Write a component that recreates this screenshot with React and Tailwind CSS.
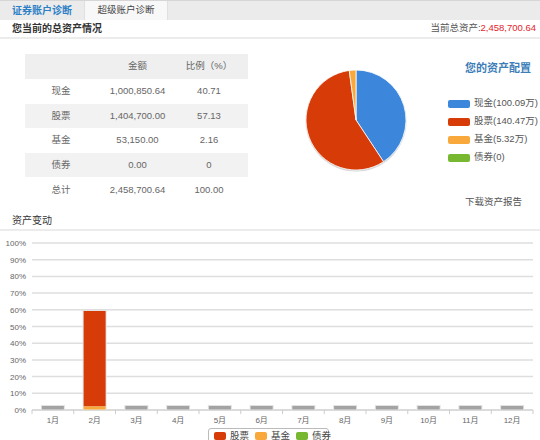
import React from "react";

const rows = [
  { name: "现金", amt: "1,000,850.64", pct: "40.71", bg: "bg-white" },
  { name: "股票", amt: "1,404,700.00", pct: "57.13", bg: "bg-[#f2f2f2]" },
  { name: "基金", amt: "53,150.00", pct: "2.16", bg: "bg-white" },
  { name: "债券", amt: "0.00", pct: "0", bg: "bg-[#f2f2f2]" },
  { name: "总计", amt: "2,458,700.64", pct: "100.00", bg: "bg-white" },
];

const legend = [
  { c: "bg-[#3c86dc]", t: "现金(100.09万)" },
  { c: "bg-[#d63b08]", t: "股票(140.47万)" },
  { c: "bg-[#f9a93c]", t: "基金(5.32万)" },
  { c: "bg-[#78b831]", t: "债券(0)" },
];

function Pie() {
  return (
    <svg width="112" height="112" viewBox="0 0 112 112">
      <circle cx="56" cy="57" r="50.5" fill="#d8d8d8" />
      <g transform="translate(1,1)">
        <path d="M55 55 L55 5 A50 50 0 0 1 82.56 96.72 Z" fill="#3c86dc" stroke="#fff" strokeWidth="0.8" />
        <path d="M55 55 L82.56 96.72 A50 50 0 1 1 48.24 5.46 Z" fill="#d63b08" stroke="#fff" strokeWidth="0.8" />
        <path d="M55 55 L48.24 5.46 A50 50 0 0 1 55 5 Z" fill="#f9a93c" stroke="#fff" strokeWidth="0.8" />
      </g>
    </svg>
  );
}

function Chart() {
  const x0 = 32;
  const x1 = 533;
  const yTop = 12; // 100%
  const yBot = 179; // 0%
  const h = yBot - yTop;
  const cw = (x1 - x0) / 12;
  const grid = [];
  for (let i = 0; i <= 10; i++) {
    const y = yBot - (h * i) / 10;
    grid.push(
      <g key={i}>
        {i > 0 && <line x1={x0} x2={x1} y1={y} y2={y} stroke="#dedede" strokeWidth="1.5" />}
        <text x="26" y={y + 3} textAnchor="end" fontSize="8" fill="#666">
          {i * 10}%
        </text>
      </g>
    );
  }
  const months = [];
  for (let m = 0; m < 12; m++) {
    const cx = x0 + cw * (m + 0.5);
    months.push(
      <g key={m}>
        <text x={cx} y={yBot + 13} textAnchor="middle" fontSize="8" fill="#666">
          {m + 1}月
        </text>
        {m !== 1 && (
          <g>
            <rect x={cx - 12} y={yBot - 5} width="24" height="5" fill="#e2e2e2" />
            <rect x={cx - 11} y={yBot - 4} width="22" height="3.5" fill="#a3a3a3" />
          </g>
        )}
      </g>
    );
  }
  const ticks = [];
  for (let k = 0; k <= 12; k++) {
    const x = x0 + cw * k;
    ticks.push(<line key={k} x1={x} x2={x} y1={yBot} y2={yBot + 4} stroke="#ccc" strokeWidth="1" />);
  }
  const c2 = x0 + cw * 1.5;
  const redTop = yBot - h * 0.5929;
  const orTop = yBot - h * 0.0216;
  return (
    <svg width="540" height="195" viewBox="0 0 540 195" className="block">
      {grid}
      <line x1={x0} x2={x1} y1={yBot} y2={yBot} stroke="#cfcfcf" strokeWidth="1.5" />
      {ticks}
      <rect x={c2 - 12} y={redTop - 1} width="24" height={yBot - redTop + 1} fill="#e4e4e4" />
      <rect x={c2 - 11} y={redTop} width="22" height={orTop - redTop} fill="#d63b08" />
      <rect x={c2 - 11} y={orTop} width="22" height={yBot - orTop - 0.5} fill="#f9a93c" />
      {months}
    </svg>
  );
}

export default function App() {
  return (
    <div className="w-[540px] h-[440px] overflow-hidden bg-white font-['Liberation_Sans','Noto_Sans_CJK_SC',sans-serif] text-[#555]">
      {/* tabs */}
      <div className="h-[20px] flex bg-[#ebebeb] border-t border-[#d6d6d6]">
        <div className="w-[84px] flex items-center justify-center text-[10px] text-[#2c80c6] font-bold">证券账户诊断</div>
        <div className="w-[84px] flex items-center justify-center text-[9.5px] text-[#444] bg-[#f8f8f8] border-x border-[#e0e0e0]">超级账户诊断</div>
        <div className="flex-1" />
      </div>
      {/* summary title */}
      <div className="h-[19px] flex items-center justify-between pl-[12px] pr-[4px] border-b-2 border-[#ececec]">
        <span className="text-[10px] font-bold text-[#333]">您当前的总资产情况</span>
        <span className="text-[9.5px] text-[#555]">
          当前总资产:<span className="text-[#e2242c]">2,458,700.64</span>
        </span>
      </div>
      {/* middle */}
      <div className="h-[173px] flex">
        <div className="pl-[25px] pt-[15px]">
          <div className="w-[223px] text-[9.5px] text-[#666]">
            <div className="h-[25px] flex items-center bg-[#efefef]">
              <div className="w-[72px]" />
              <div className="w-[81px] text-center">金额</div>
              <div className="w-[62px] text-center">比例（%）</div>
            </div>
            {rows.map((r) => (
              <div key={r.name} className={`h-[24.6px] flex items-center ${r.bg}`}>
                <div className="w-[72px] text-center">{r.name}</div>
                <div className="w-[81px] text-center">{r.amt}</div>
                <div className="w-[62px] text-center">{r.pct}</div>
              </div>
            ))}
          </div>
        </div>
        <div className="pl-[52px] pt-[25px]">
          <Pie />
        </div>
        <div className="pl-[36px] flex flex-col">
          <div className="mt-[21px] pl-[17px] text-[11px] font-bold text-[#3d7db8]">您的资产配置</div>
          <div className="mt-[21px] flex flex-col gap-[6px]">
            {legend.map((l) => (
              <div key={l.t} className="flex items-center h-[12px]">
                <div className={`w-[22px] h-[8px] shrink-0 rounded-[2px] ${l.c}`} />
                <span className="ml-[4px] text-[9.5px] text-[#555] whitespace-nowrap">{l.t}</span>
              </div>
            ))}
          </div>
          <div className="mt-[31px] pl-[17px] text-[9.5px] text-[#555]">下载资产报告</div>
        </div>
      </div>
      {/* 资产变动 */}
      <div className="h-[19px] flex items-center pl-[12px] border-b-2 border-[#ececec] text-[10px] text-[#333]">资产变动</div>
      <Chart />
      <div className="mt-[2px] ml-[208px] w-[121px] h-[16px] border border-[#bbb] rounded-[3px] flex items-center px-[5px] text-[9.5px] text-[#444] whitespace-nowrap">
        <div className="w-[12px] h-[8px] shrink-0 rounded-[2px] bg-[#d63b08]" />
        <span className="ml-[4px]">股票</span>
        <div className="w-[12px] h-[8px] shrink-0 rounded-[2px] bg-[#f9a93c] ml-[6px]" />
        <span className="ml-[4px]">基金</span>
        <div className="w-[12px] h-[8px] shrink-0 rounded-[2px] bg-[#78b831] ml-[6px]" />
        <span className="ml-[4px]">债券</span>
      </div>
    </div>
  );
}
